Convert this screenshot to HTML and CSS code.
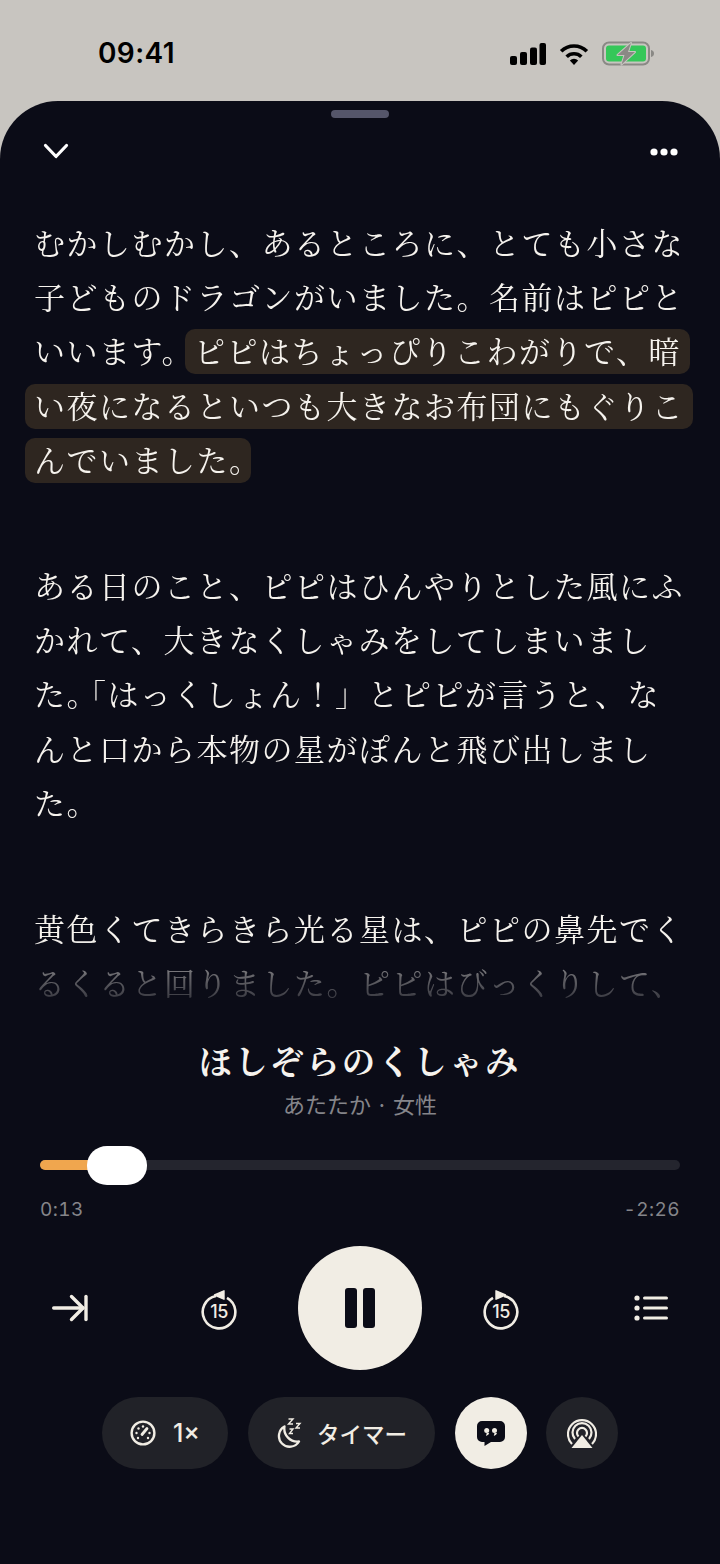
FILE: index.html
```html
<!DOCTYPE html>
<html lang="ja">
<head>
<meta charset="UTF-8">
<meta name="viewport" content="width=device-width, initial-scale=1.0">
<title>ほしぞらのくしゃみ</title>
<link rel="stylesheet" href="styles.css">
</head>
<body>

<div class="status-bar">
    <span class="clock">09:41</span>
    <div class="status-icons">
        <svg width="36" height="22" viewBox="0 0 36 22"><g fill="#000"><rect x="0" y="13" width="7" height="9" rx="2"/><rect x="10" y="9" width="7" height="13" rx="2"/><rect x="20" y="4.500" width="7" height="17.500" rx="2"/><rect x="29.500" y="0" width="6.500" height="22" rx="2"/></g></svg>
        <svg width="30" height="22" viewBox="0 0 32 24"><g fill="none" stroke="#000" stroke-width="4"><path d="M2 9a20 20 0 0 1 28 0"/><path d="M8 15a11.500 11.500 0 0 1 16 0"/></g><path d="M11.500 19a6.500 6.500 0 0 1 9 0L16 24z" fill="#000"/></svg>
        <svg width="52" height="25" viewBox="0 0 52 25">
            <rect x="1" y="1.500" width="46" height="22" rx="6" fill="none" stroke="#8a8985" stroke-width="2"/>
            <rect x="4" y="4.500" width="40" height="16" rx="3" fill="#35c759"/>
            <path d="M49 9c2 .5 3 1.800 3 3.500s-1 3-3 3.500z" fill="#8a8985"/>
            <path d="M29 2L15.500 14h7l-3 9.500L33 11h-7z" fill="#8a8985" stroke="#c8c5c0" stroke-width="2" stroke-linejoin="round" paint-order="stroke"/>
        </svg>
    </div>
</div>

<div class="sheet">
    <div class="handle"></div>
    <div class="top-row">
        <svg width="26" height="17" viewBox="0 0 26 17"><path d="M2.500 2.500L13 13.500 23.500 2.500" fill="none" stroke="#fff" stroke-width="3.200" stroke-linecap="round" stroke-linejoin="round"/></svg>
        <svg width="28" height="8" viewBox="0 0 28 8"><g fill="#fff"><circle cx="4" cy="4" r="3.600"/><circle cx="14" cy="4" r="3.600"/><circle cx="24" cy="4" r="3.600"/></g></svg>
    </div>

    <div class="story">
        <div class="para">
            <div class="line">むかしむかし、あるところに、とても小さな</div>
            <div class="line">子どものドラゴンがいました。名前はピピと</div>
            <div class="line">いいます。<span class="hl hl-first">ピピはちょっぴりこわがりで、暗</span></div>
            <div class="line"><span class="hl">い夜になるといつも大きなお布団にもぐりこ</span></div>
            <div class="line"><span class="hl">んでいました<span class="tight-end">。</span></span></div>
        </div>
        <div class="para">
            <div class="line">ある日のこと、ピピはひんやりとした風にふ</div>
            <div class="line">かれて、大きなくしゃみをしてしまいまし</div>
            <div class="line">た<span class="tight">。</span>「はっくしょん！」とピピが言うと、な</div>
            <div class="line">んと口から本物の星がぽんと飛び出しまし</div>
            <div class="line">た。</div>
        </div>
        <div class="para">
            <div class="line">黄色くてきらきら光る星は、ピピの鼻先でく</div>
            <div class="line">るくると回りました。ピピはびっくりして、</div>
        </div>
    </div>

    <div class="track-info">
        <div class="title">ほしぞらのくしゃみ</div>
        <div class="subtitle">あたたか · 女性</div>
    </div>

    <div class="slider">
        <div class="slider-fill"></div>
        <div class="slider-thumb"></div>
    </div>
    <div class="times">
        <span>0:13</span>
        <span>-2:26</span>
    </div>

    <div class="controls">
        <svg width="36" height="28" viewBox="0 0 36 28"><g fill="none" stroke="#f1ede4" stroke-width="3.400" stroke-linecap="round" stroke-linejoin="round"><path d="M1.700 14H31"/><path d="M19.500 2.500L31 14 19.500 25.500"/><path d="M34 2.500V25.500"/></g></svg>
        <div class="transport">
            <div class="skip">
                <svg width="36" height="40" viewBox="0 0 36 40"><path d="M15 6A16.300 16.300 0 1 0 26 7.800" fill="none" stroke="#f1ede4" stroke-width="2.600"/><path d="M13.500 5L23 .8V9.200z" fill="#f1ede4" stroke="#f1ede4" stroke-width="1.400" stroke-linejoin="round"/></svg>
                <span class="skip-num">15</span>
            </div>
            <div class="play">
                <div class="bar"></div>
                <div class="bar"></div>
            </div>
            <div class="skip">
                <svg width="36" height="40" viewBox="0 0 36 40"><path d="M21 6A16.300 16.300 0 1 1 10 7.800" fill="none" stroke="#f1ede4" stroke-width="2.600"/><path d="M22.500 5L13 .8V9.200z" fill="#f1ede4" stroke="#f1ede4" stroke-width="1.400" stroke-linejoin="round"/></svg>
                <span class="skip-num">15</span>
            </div>
        </div>
        <svg width="34" height="26" viewBox="0 0 34 26"><g fill="#f1ede4"><circle cx="3" cy="3" r="2.600"/><circle cx="3" cy="13" r="2.600"/><circle cx="3" cy="23" r="2.600"/><rect x="9" y="1.500" width="25" height="3" rx="1.500"/><rect x="9" y="11.500" width="25" height="3" rx="1.500"/><rect x="9" y="21.500" width="25" height="3" rx="1.500"/></g></svg>
    </div>

    <div class="chips">
        <div class="chip chip-speed">
            <svg width="26" height="26" viewBox="0 0 26 26"><circle cx="13" cy="13" r="11.400" fill="none" stroke="#f1ede4" stroke-width="2.400"/><path d="M12 14.500L17 8.500" stroke="#f1ede4" stroke-width="2.800" stroke-linecap="round"/><g fill="#f1ede4"><circle cx="6.500" cy="13" r="1.200"/><circle cx="8.500" cy="8.500" r="1.200"/><circle cx="13" cy="6.500" r="1.200"/><circle cx="19.500" cy="13" r="1.200"/><circle cx="8" cy="18" r="1.200"/><circle cx="18" cy="18" r="1.200"/></g></svg>
            <span class="speed-text">1×</span>
        </div>
        <div class="chip chip-timer">
            <svg width="26" height="30" viewBox="0 0 26 30"><path d="M8.500 8.500A10.800 10.800 0 1 0 23 23.500 13 13 0 0 1 8.500 8.500z" fill="none" stroke="#f1ede4" stroke-width="2.300" stroke-linejoin="round"/><g fill="none" stroke="#f1ede4" stroke-width="1.400"><path d="M12.500 1h4.500l-4.500 5h4.500"/><path d="M20 5.500h4l-4 4.500h4"/><path d="M13.500 11h3.500l-3.500 4.500h3.500"/></g></svg>
            <span>タイマー</span>
        </div>
        <div class="round round-on">
            <svg width="28" height="25" viewBox="0 0 28 25"><path d="M5 0H23A5 5 0 0 1 28 5V16A5 5 0 0 1 23 21H14L7.500 25V21H5A5 5 0 0 1 0 16V5A5 5 0 0 1 5 0z" fill="#0b0c17"/><g fill="#f1ede4"><circle cx="9.700" cy="9.500" r="2.500"/><circle cx="17.500" cy="9.500" r="2.500"/><path d="M9.700 12H12.200Q12 14 9 15z"/><path d="M17.500 12H20Q19.800 14 16.800 15z"/></g></svg>
        </div>
        <div class="round round-air">
            <svg width="30" height="29" viewBox="0 0 30 29"><g fill="none" stroke="#f1ede4" stroke-width="2.200"><path d="M5 25A14 14 0 1 1 25 25"/><path d="M8 20A9.500 9.500 0 1 1 22 20"/><path d="M11.500 17.500A5 5 0 1 1 18.500 17.500"/></g><path d="M15 16L25.500 29H4.500z" fill="#f1ede4"/></svg>
        </div>
    </div>
</div>

</body>
</html>
```

FILE: styles.css
```css
html, body {
    margin: 0;
    padding: 0;
}
body {
    width: 720px;
    height: 1564px;
    overflow: hidden;
    background-color: #c8c5c0;
    font-family: "Noto Serif CJK JP", "Noto Sans CJK JP", serif;
}
.status-bar {
    height: 101px;
    box-sizing: border-box;
    padding: 38px 66px 0 98px;
    display: flex;
    justify-content: space-between;
    align-items: flex-start;
}
.clock {
    font-family: Inter, "Liberation Sans", sans-serif;
    font-size: 28px;
    font-weight: 600;
    line-height: 30px;
    letter-spacing: 0.400px;
    color: #000;
}
.status-icons {
    display: flex;
    align-items: center;
    gap: 13px;
    padding-top: 3px;
}
.sheet {
    height: 1463px;
    box-sizing: border-box;
    background-color: #0b0c17;
    border-radius: 58px 58px 0 0;
    padding-top: 9px;
    display: flex;
    flex-direction: column;
}
.handle {
    width: 58px;
    height: 8px;
    margin: 0 auto;
    border-radius: 4px;
    background-color: #55566a;
}
.top-row {
    display: flex;
    justify-content: space-between;
    align-items: center;
    padding: 25px 42px 0 43px;
    height: 17px;
}
.story {
    margin-top: 55px;
    padding-left: 34px;
    height: 823px;
    color: #f6f3ee;
    font-size: 31px;
    letter-spacing: 1.500px;
    -webkit-mask-image: linear-gradient(to bottom, #000 725px, rgba(0,0,0,0.4) 760px, rgba(0,0,0,0.15) 790px);
    mask-image: linear-gradient(to bottom, #000 725px, rgba(0,0,0,0.4) 760px, rgba(0,0,0,0.15) 790px);
}
.para {
    margin-bottom: 72px;
}
.line {
    height: 54.200px;
    line-height: 54.200px;
    white-space: nowrap;
}
.hl {
    display: inline-block;
    height: 42px;
    line-height: 42px;
    background-color: #2e2620;
    border-radius: 10px;
    padding: 0 9px 3px;
    margin: 0 -9px;
}
.tight {
    font-feature-settings: "halt";
    margin-right: 7px;
}
.tight-end {
    font-feature-settings: "halt";
    margin-right: -4px;
}
.track-info {
    text-align: center;
}
.title {
    font-size: 33px;
    font-weight: 700;
    letter-spacing: 2.800px;
    line-height: 44px;
    color: #f6f3ee;
}
.subtitle {
    margin-top: 6px;
    font-family: "Noto Sans CJK JP", sans-serif;
    font-size: 22px;
    line-height: 30px;
    color: #85858a;
}
.slider {
    position: relative;
    height: 10px;
    margin: 42px 40px 0;
    border-radius: 5px;
    background-color: #24252e;
}
.slider-fill {
    width: 60px;
    height: 10px;
    border-radius: 5px;
    background-color: #f0a64e;
}
.slider-thumb {
    position: absolute;
    left: 47px;
    top: -14px;
    width: 60px;
    height: 39px;
    border-radius: 20px / 19px;
    background-color: #fff;
}
.times {
    display: flex;
    justify-content: space-between;
    margin: 25px 40px 0;
    font-family: Inter, "Liberation Sans", sans-serif;
    font-size: 19px;
    font-variant-numeric: tabular-nums;
    line-height: 30px;
    letter-spacing: 0.400px;
    color: #85858a;
}
.controls {
    display: flex;
    justify-content: space-between;
    align-items: center;
    margin-top: 21px;
    padding: 0 52px;
    height: 124px;
}
.transport {
    display: flex;
    align-items: center;
    gap: 61px;
    margin-left: -2px;
}
.skip {
    position: relative;
    width: 36px;
    height: 40px;
    margin-top: 4px;
}
.skip svg {
    display: block;
}
.skip-num {
    position: absolute;
    left: 0;
    right: 0;
    top: 9px;
    text-align: center;
    font-family: Inter, "Liberation Sans", sans-serif;
    font-size: 18px;
    font-weight: 500;
    line-height: 26px;
    letter-spacing: -0.500px;
    color: #f1ede4;
}
.play {
    width: 124px;
    height: 124px;
    border-radius: 50%;
    background-color: #f1ede4;
    display: flex;
    justify-content: center;
    align-items: center;
    gap: 6px;
}
.bar {
    width: 12px;
    height: 40px;
    border-radius: 3px;
    background-color: #0b0c17;
}
.chips {
    display: flex;
    justify-content: center;
    gap: 20px;
    margin-top: 27px;
}
.chip, .round {
    height: 72px;
    border-radius: 36px;
    background-color: #212228;
    display: flex;
    justify-content: center;
    align-items: center;
    color: #f1ede4;
    font-family: "Noto Sans CJK JP", sans-serif;
    font-size: 22.500px;
    font-weight: 500;
}
.chip-speed {
    width: 126px;
    gap: 17px;
}
.speed-text {
    font-family: Inter, "Liberation Sans", sans-serif;
    font-size: 25px;
    font-weight: 500;
}
.chip-timer {
    width: 187px;
    gap: 15px;
}
.round {
    width: 72px;
}
.round-air {
    margin-left: -1px;
}
.round-on {
    background-color: #f1ede4;
}
```
